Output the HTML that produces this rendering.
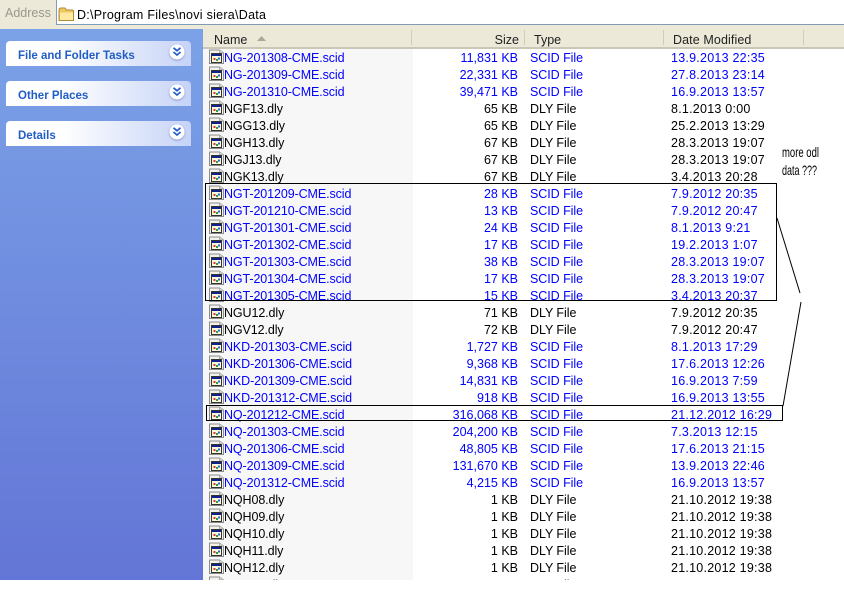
<!DOCTYPE html>
<html><head><meta charset="utf-8"><style>
html,body{margin:0;padding:0;background:#fff}
#p{position:relative;width:844px;height:599px;overflow:hidden;background:#fff;font-family:"Liberation Sans",sans-serif;font-size:12.5px;color:#000}
.a{position:absolute}
#s{left:0;top:29px;width:203px;height:551px;background:linear-gradient(#7ba2e7,#6375d6)}
.pn{position:absolute;left:6px;width:185px;height:25px;background:linear-gradient(90deg,#fff 30%,#c6d3f7);border-radius:4px 4px 0 0;font:bold 11.5px/30px "Liberation Sans",sans-serif;color:#215dc6;text-indent:12px}
.pn svg{position:absolute;left:163px;top:3px;filter:drop-shadow(0 1px 1px rgba(60,80,150,.45))}
#l{left:203px;top:49px;width:641px;height:531px;overflow:hidden;background:linear-gradient(90deg,#f7f7f7 210px,#fff 210px)}
.r{position:absolute;left:0;width:641px;height:17px;line-height:19px;white-space:nowrap}
.r svg{position:absolute;left:6px;top:0}
.r b{font-weight:400;position:absolute}
.n{left:21px;letter-spacing:-.1px}.z{right:326px;text-align:right}.t{left:327px;letter-spacing:-.05px}.d{left:468px;letter-spacing:.24px}
.u{color:#0000ff}
.h{position:absolute;top:33px;line-height:15px;color:#222}
.v{position:absolute;top:30px;width:1px;height:15px;background:#d0cdbc}
</style></head><body><div id="p">
<svg width="0" height="0" style="position:absolute"><defs><symbol id="i" viewBox="0 0 16 16">
<path d="M.5 1H10.500L14.500 4V14.500H.5Z" fill="#f2f2ea" stroke="#8c8c8c"/>
<path d="M10.500 1V4H14.500" fill="#ddd" stroke="#aaa"/>
<rect x="2.500" y="4.500" width="10" height="9" fill="#fff" stroke="#333"/>
<rect x="3" y="5" width="9" height="2" fill="#10208c"/>
<rect x="3" y="7" width="9" height="6" fill="#fdf8d8"/>
<rect x="4.500" y="9" width="2" height="2" fill="#d33"/>
<rect x="7" y="10" width="2" height="2" fill="#2a9a4a"/>
<rect x="9" y="8.500" width="2" height="2" fill="#1a6ae0"/>
</symbol><symbol id="c" viewBox="0 0 16 16">
<circle cx="8" cy="8" r="7.500" fill="#fff"/><path d="M4.500 3.800L8 6.800L11.500 3.800M4.500 8L8 11L11.500 8" fill="none" stroke="#215dc6" stroke-width="1.700"/>
</symbol></defs></svg>

<div class="a" style="left:0;top:0;width:844px;height:26px;background:#ece9d8"></div>
<div class="a" style="left:56px;top:0;width:788px;height:25px;background:#fff;border-left:1px solid #7f9db9;border-bottom:1px solid #7f9db9;box-sizing:border-box"></div>
<div class="a" style="left:5px;top:6px;color:#9a988c;font-size:12.5px;line-height:15px">Address</div>
<svg class="a" style="left:58px;top:7px" width="17" height="15" viewBox="0 0 17 15"><path d="M1 3Q1 1 3 1H7L8.500 3H14Q15.500 3 15.500 4.500V13.500H1Z" fill="#f0c860" stroke="#b08a34"/><path d="M2 5.500H15V13H2Z" fill="#fde9a0"/></svg>
<div class="a" style="left:77px;top:7px;line-height:16px;letter-spacing:.27px">D:\Program Files\novi siera\Data</div>

<div class="a" style="left:0;top:26px;width:844px;height:22px;background:#ece9d8"></div>
<div class="a" style="left:203px;top:47px;width:641px;height:2px;background:#cbc7b8"></div>
<div class="h" style="left:214px">Name</div>
<svg class="a" style="left:257px;top:35px" width="10" height="7"><path d="M0 6H9L4.500 1Z" fill="#aca899"/></svg>
<div class="h" style="right:325px">Size</div>
<div class="h" style="left:534px">Type</div>
<div class="h" style="left:673px;letter-spacing:.1px">Date Modified</div>
<div class="v" style="left:411px"></div><div class="v" style="left:524px"></div><div class="v" style="left:663px"></div><div class="v" style="left:803px"></div>

<div id="s" class="a"></div>
<div class="pn" style="top:41px">File and Folder Tasks<svg width="16" height="16"><use href="#c"/></svg></div>
<div class="pn" style="top:81px">Other Places<svg width="16" height="16"><use href="#c"/></svg></div>
<div class="pn" style="top:121px">Details<svg width="16" height="16"><use href="#c"/></svg></div>

<div id="l" class="a">
<div class="r u" style="top:0"><svg width="16" height="16"><use href="#i"/></svg><b class="n">NG-201308-CME.scid</b><b class="z">11,831 KB</b><b class="t">SCID File</b><b class="d">13.9.2013 22:35</b></div>
<div class="r u" style="top:17px"><svg width="16" height="16"><use href="#i"/></svg><b class="n">NG-201309-CME.scid</b><b class="z">22,331 KB</b><b class="t">SCID File</b><b class="d">27.8.2013 23:14</b></div>
<div class="r u" style="top:34px"><svg width="16" height="16"><use href="#i"/></svg><b class="n">NG-201310-CME.scid</b><b class="z">39,471 KB</b><b class="t">SCID File</b><b class="d">16.9.2013 13:57</b></div>
<div class="r" style="top:51px"><svg width="16" height="16"><use href="#i"/></svg><b class="n">NGF13.dly</b><b class="z">65 KB</b><b class="t">DLY File</b><b class="d">8.1.2013 0:00</b></div>
<div class="r" style="top:68px"><svg width="16" height="16"><use href="#i"/></svg><b class="n">NGG13.dly</b><b class="z">65 KB</b><b class="t">DLY File</b><b class="d">25.2.2013 13:29</b></div>
<div class="r" style="top:85px"><svg width="16" height="16"><use href="#i"/></svg><b class="n">NGH13.dly</b><b class="z">67 KB</b><b class="t">DLY File</b><b class="d">28.3.2013 19:07</b></div>
<div class="r" style="top:102px"><svg width="16" height="16"><use href="#i"/></svg><b class="n">NGJ13.dly</b><b class="z">67 KB</b><b class="t">DLY File</b><b class="d">28.3.2013 19:07</b></div>
<div class="r" style="top:119px"><svg width="16" height="16"><use href="#i"/></svg><b class="n">NGK13.dly</b><b class="z">67 KB</b><b class="t">DLY File</b><b class="d">3.4.2013 20:28</b></div>
<div class="r u" style="top:136px"><svg width="16" height="16"><use href="#i"/></svg><b class="n">NGT-201209-CME.scid</b><b class="z">28 KB</b><b class="t">SCID File</b><b class="d">7.9.2012 20:35</b></div>
<div class="r u" style="top:153px"><svg width="16" height="16"><use href="#i"/></svg><b class="n">NGT-201210-CME.scid</b><b class="z">13 KB</b><b class="t">SCID File</b><b class="d">7.9.2012 20:47</b></div>
<div class="r u" style="top:170px"><svg width="16" height="16"><use href="#i"/></svg><b class="n">NGT-201301-CME.scid</b><b class="z">24 KB</b><b class="t">SCID File</b><b class="d">8.1.2013 9:21</b></div>
<div class="r u" style="top:187px"><svg width="16" height="16"><use href="#i"/></svg><b class="n">NGT-201302-CME.scid</b><b class="z">17 KB</b><b class="t">SCID File</b><b class="d">19.2.2013 1:07</b></div>
<div class="r u" style="top:204px"><svg width="16" height="16"><use href="#i"/></svg><b class="n">NGT-201303-CME.scid</b><b class="z">38 KB</b><b class="t">SCID File</b><b class="d">28.3.2013 19:07</b></div>
<div class="r u" style="top:221px"><svg width="16" height="16"><use href="#i"/></svg><b class="n">NGT-201304-CME.scid</b><b class="z">17 KB</b><b class="t">SCID File</b><b class="d">28.3.2013 19:07</b></div>
<div class="r u" style="top:238px"><svg width="16" height="16"><use href="#i"/></svg><b class="n">NGT-201305-CME.scid</b><b class="z">15 KB</b><b class="t">SCID File</b><b class="d">3.4.2013 20:37</b></div>
<div class="r" style="top:255px"><svg width="16" height="16"><use href="#i"/></svg><b class="n">NGU12.dly</b><b class="z">71 KB</b><b class="t">DLY File</b><b class="d">7.9.2012 20:35</b></div>
<div class="r" style="top:272px"><svg width="16" height="16"><use href="#i"/></svg><b class="n">NGV12.dly</b><b class="z">72 KB</b><b class="t">DLY File</b><b class="d">7.9.2012 20:47</b></div>
<div class="r u" style="top:289px"><svg width="16" height="16"><use href="#i"/></svg><b class="n">NKD-201303-CME.scid</b><b class="z">1,727 KB</b><b class="t">SCID File</b><b class="d">8.1.2013 17:29</b></div>
<div class="r u" style="top:306px"><svg width="16" height="16"><use href="#i"/></svg><b class="n">NKD-201306-CME.scid</b><b class="z">9,368 KB</b><b class="t">SCID File</b><b class="d">17.6.2013 12:26</b></div>
<div class="r u" style="top:323px"><svg width="16" height="16"><use href="#i"/></svg><b class="n">NKD-201309-CME.scid</b><b class="z">14,831 KB</b><b class="t">SCID File</b><b class="d">16.9.2013 7:59</b></div>
<div class="r u" style="top:340px"><svg width="16" height="16"><use href="#i"/></svg><b class="n">NKD-201312-CME.scid</b><b class="z">918 KB</b><b class="t">SCID File</b><b class="d">16.9.2013 13:55</b></div>
<div class="r u" style="top:357px"><svg width="16" height="16"><use href="#i"/></svg><b class="n">NQ-201212-CME.scid</b><b class="z">316,068 KB</b><b class="t">SCID File</b><b class="d">21.12.2012 16:29</b></div>
<div class="r u" style="top:374px"><svg width="16" height="16"><use href="#i"/></svg><b class="n">NQ-201303-CME.scid</b><b class="z">204,200 KB</b><b class="t">SCID File</b><b class="d">7.3.2013 12:15</b></div>
<div class="r u" style="top:391px"><svg width="16" height="16"><use href="#i"/></svg><b class="n">NQ-201306-CME.scid</b><b class="z">48,805 KB</b><b class="t">SCID File</b><b class="d">17.6.2013 21:15</b></div>
<div class="r u" style="top:408px"><svg width="16" height="16"><use href="#i"/></svg><b class="n">NQ-201309-CME.scid</b><b class="z">131,670 KB</b><b class="t">SCID File</b><b class="d">13.9.2013 22:46</b></div>
<div class="r u" style="top:425px"><svg width="16" height="16"><use href="#i"/></svg><b class="n">NQ-201312-CME.scid</b><b class="z">4,215 KB</b><b class="t">SCID File</b><b class="d">16.9.2013 13:57</b></div>
<div class="r" style="top:442px"><svg width="16" height="16"><use href="#i"/></svg><b class="n">NQH08.dly</b><b class="z">1 KB</b><b class="t">DLY File</b><b class="d">21.10.2012 19:38</b></div>
<div class="r" style="top:459px"><svg width="16" height="16"><use href="#i"/></svg><b class="n">NQH09.dly</b><b class="z">1 KB</b><b class="t">DLY File</b><b class="d">21.10.2012 19:38</b></div>
<div class="r" style="top:476px"><svg width="16" height="16"><use href="#i"/></svg><b class="n">NQH10.dly</b><b class="z">1 KB</b><b class="t">DLY File</b><b class="d">21.10.2012 19:38</b></div>
<div class="r" style="top:493px"><svg width="16" height="16"><use href="#i"/></svg><b class="n">NQH11.dly</b><b class="z">1 KB</b><b class="t">DLY File</b><b class="d">21.10.2012 19:38</b></div>
<div class="r" style="top:510px"><svg width="16" height="16"><use href="#i"/></svg><b class="n">NQH12.dly</b><b class="z">1 KB</b><b class="t">DLY File</b><b class="d">21.10.2012 19:38</b></div>
<div class="r" style="top:527px"><svg width="16" height="16"><use href="#i"/></svg><b class="n">NQH13.dly</b><b class="z">1 KB</b><b class="t">DLY File</b><b class="d">21.10.2012 19:38</b></div>
</div>

<svg class="a" style="left:0;top:0" width="844" height="599">
<rect x="205.500" y="183.500" width="571" height="117" fill="none" stroke="#000"/>
<rect x="206.500" y="405.500" width="576" height="15" fill="none" stroke="#000"/>
<path d="M777 218L800 293M801 302L783 406" fill="none" stroke="#000"/>
<text x="782" y="157" font-family="Liberation Sans" font-size="14" textLength="37" lengthAdjust="spacingAndGlyphs">more odl</text>
<text x="782" y="175" font-family="Liberation Sans" font-size="14" textLength="35" lengthAdjust="spacingAndGlyphs">data ???</text>
</svg>
</div></body></html>
